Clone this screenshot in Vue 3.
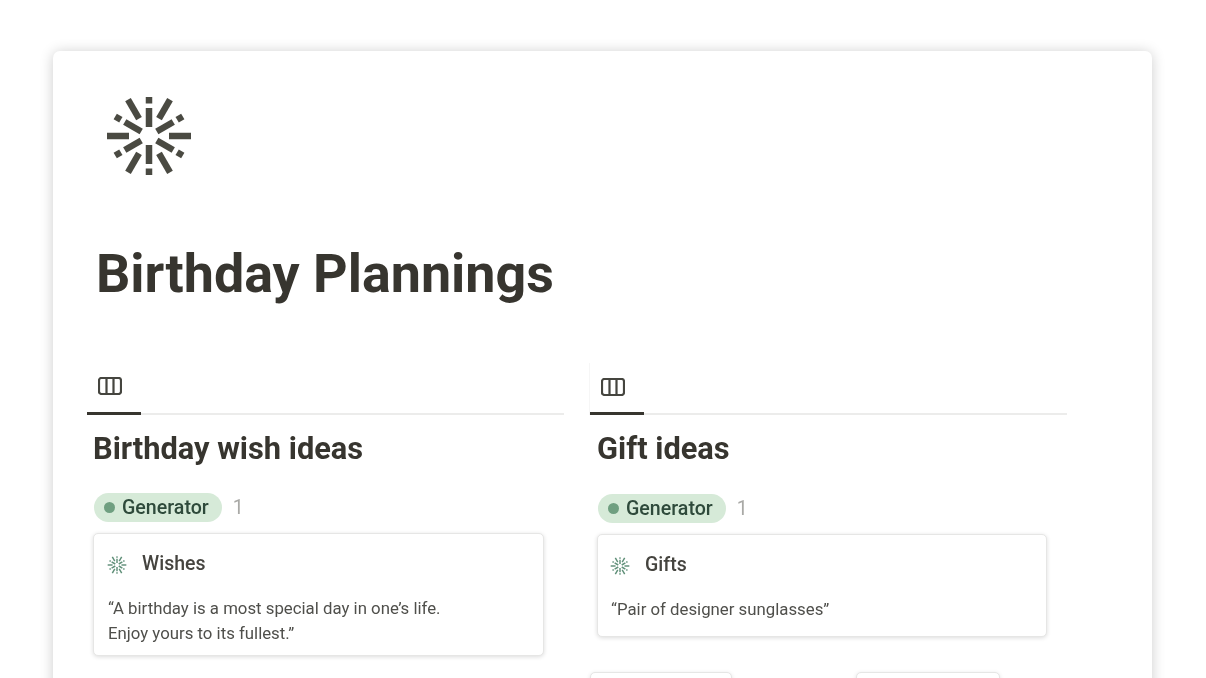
<template>
  <div class="page">
    <div class="sheet">
      <svg class="logo" viewBox="-45 -45 90 90" xmlns="http://www.w3.org/2000/svg">
        <g v-for="a in evenSpokes" :key="a" :transform="`rotate(${a})`" fill="#4a4a42">
          <rect x="-3.25" y="-28" width="6.5" height="19" />
          <rect x="-3.25" y="-39" width="6.5" height="6.5" />
        </g>
        <rect
          v-for="a in oddSpokes"
          :key="a"
          :transform="`rotate(${a})`"
          x="-3.25"
          y="-42"
          width="6.5"
          height="22"
          fill="#4a4a42"
        />
      </svg>

      <h1 class="title">Birthday Plannings</h1>

      <div class="columns">
        <section v-for="col in columns" :key="col.heading" class="column" :class="col.cls">
          <div class="tabs">
            <div class="tab">
              <svg class="board-icon" viewBox="0 0 24 18" fill="none" xmlns="http://www.w3.org/2000/svg">
                <rect x="1" y="1" width="22" height="16" rx="2.5" stroke="#45453f" stroke-width="2.2" />
                <path d="M8.5 1V17M15.5 1V17" stroke="#45453f" stroke-width="2.2" />
              </svg>
            </div>
          </div>

          <h2 class="heading">{{ col.heading }}</h2>

          <div class="group">
            <span class="pill"><i class="pill-dot"></i>Generator</span>
            <span class="count">1</span>
          </div>

          <div class="card">
            <div class="card-head">
              <svg class="mini-logo" viewBox="-45 -45 90 90" xmlns="http://www.w3.org/2000/svg">
                <g v-for="a in evenSpokes" :key="a" :transform="`rotate(${a})`" fill="#5f8f78">
                  <rect x="-3.25" y="-28" width="6.5" height="19" />
                  <rect x="-3.25" y="-39" width="6.5" height="6.5" />
                </g>
                <rect
                  v-for="a in oddSpokes"
                  :key="a"
                  :transform="`rotate(${a})`"
                  x="-3.25"
                  y="-42"
                  width="6.5"
                  height="22"
                  fill="#5f8f78"
                />
              </svg>
              <span class="card-title">{{ col.card }}</span>
            </div>
            <p v-for="line in col.lines" :key="line" class="card-line">{{ line }}</p>
          </div>

          <div v-if="col.more" class="more">
            <div class="stub"></div>
            <div class="stub"></div>
          </div>
        </section>
      </div>
    </div>
  </div>
</template>

<script setup>
const evenSpokes = [0, 60, 120, 180, 240, 300]
const oddSpokes = [30, 90, 150, 210, 270, 330]

const columns = [
  {
    heading: 'Birthday wish ideas',
    card: 'Wishes',
    lines: ['“A birthday is a most special day in one’s life.', 'Enjoy yours to its fullest.”'],
    cls: 'left',
    more: false
  },
  {
    heading: 'Gift ideas',
    card: 'Gifts',
    lines: ['“Pair of designer sunglasses”'],
    cls: 'right',
    more: true
  }
]
</script>

<style>
html,
body {
  margin: 0;
  background: #fff;
  overflow: hidden;
}
</style>

<style scoped>
.page {
  height: 678px;
  box-sizing: border-box;
  padding: 51px 54px 0 53px;
  overflow: hidden;
  font-family: Roboto, "Liberation Sans", sans-serif;
  color: #37352f;
}

.sheet {
  height: 700px;
  box-sizing: border-box;
  padding: 40px 34px 0;
  background: #fff;
  border-radius: 7px;
  box-shadow: 0 1px 14px rgba(0, 0, 0, 0.2);
  filter: blur(0.4px);
}

.logo {
  display: block;
  width: 90px;
  height: 90px;
  margin-left: 17px;
}

.title {
  margin: 61px 0 0 9px;
  font-size: 53.8px;
  line-height: 64px;
  font-weight: 700;
  color: #37352f;
}

.columns {
  display: grid;
  grid-template-columns: 477px 477px;
  column-gap: 26px;
  margin-top: 57px;
}

.tabs {
  height: 52px;
  border-bottom: 2px solid #ececeb;
  box-sizing: border-box;
}

.tab {
  width: 54px;
  height: 52px;
  box-sizing: border-box;
  padding: 14px 0 0 11px;
  border-bottom: 3px solid #37352f;
}

.column.right .tab {
  padding-top: 15px;
}

.column.right .tabs {
  box-shadow: -1px 0 0 #f6f6f6;
}

.board-icon {
  display: block;
  width: 24px;
  height: 18px;
}

.heading {
  margin: 16px 0 0 6px;
  font-size: 30.8px;
  line-height: 36px;
  font-weight: 700;
  color: #37352f;
}

.column.right .heading {
  margin-left: 7px;
}

.group {
  display: flex;
  align-items: center;
  gap: 11px;
  margin: 26px 0 0 7px;
}

.column.right .group {
  margin: 27px 0 0 8px;
}

.pill {
  display: flex;
  align-items: center;
  height: 29px;
  padding: 0 13px 0 10px;
  border-radius: 15px;
  background: #d6ead8;
  color: #2e4a3b;
  font-size: 19.6px;
  font-weight: 500;
}

.pill-dot {
  width: 11px;
  height: 11px;
  margin-right: 7px;
  border-radius: 50%;
  background: #6f9f80;
}

.count {
  font-size: 19.6px;
  color: #a9a9a6;
}

.card {
  margin: 11px 20px 0 6px;
  padding: 15px 14px 9px;
  background: #fff;
  border: 1px solid #e6e6e5;
  border-radius: 5px;
  box-shadow: 0 1px 4px rgba(0, 0, 0, 0.14);
}

.column.right .card {
  margin-left: 7px;
  padding: 15px 13px 14px;
}

.card-head {
  display: flex;
  align-items: center;
  gap: 15px;
  height: 28px;
  margin: 0 0 19px -1px;
}

.mini-logo {
  width: 20px;
  height: 20px;
  flex: none;
  margin-top: 3px;
}

.card-title {
  font-size: 19.5px;
  font-weight: 500;
  color: #45443f;
}

.card-line {
  margin: 0;
  font-size: 16.8px;
  line-height: 25px;
  color: #4f4f4b;
}

.more {
  display: flex;
  gap: 124px;
  margin-top: 35px;
}

.stub {
  width: 142px;
  height: 60px;
  box-sizing: border-box;
  background: #fff;
  border: 1px solid #e6e6e5;
  border-radius: 5px;
  box-shadow: 0 1px 4px rgba(0, 0, 0, 0.12);
}

.stub + .stub {
  width: 144px;
}
</style>
